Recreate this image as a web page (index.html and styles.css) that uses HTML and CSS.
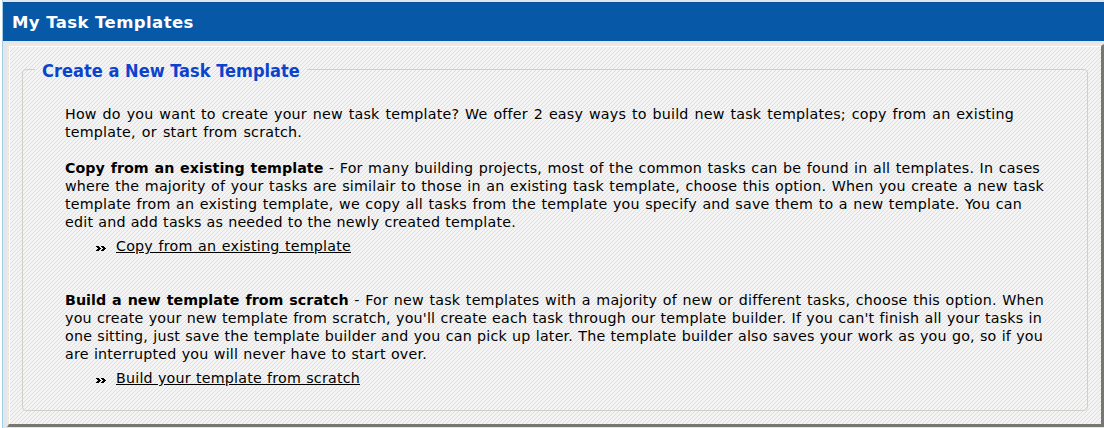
FILE: index.html
```html
<!DOCTYPE html>
<html lang="en">
<head>
<meta charset="utf-8">
<title>My Task Templates</title>
<link rel="stylesheet" href="styles.css">
</head>
<body>
<div class="window">
  <h1 class="title">My Task Templates</h1>
  <main class="panel">
    <fieldset class="group">
      <legend class="legend"><span class="caption">Create a New Task Template</span></legend>
      <p class="text">
        <span class="line w949">How do you want to create your new task template? We offer 2 easy ways to build new task templates; copy from an existing</span>
        <span class="line w237">template, or start from scratch.</span>
      </p>
      <p class="text">
        <span class="line w975"><b>Copy from an existing template</b> - For many building projects, most of the common tasks can be found in all templates. In cases</span>
        <span class="line w979">where the majority of your tasks are similair to those in an existing task template, choose this option. When you create a new task</span>
        <span class="line w957">template from an existing template, we copy all tasks from the template you specify and save them to a new template. You can</span>
        <span class="line w451">edit and add tasks as needed to the newly created template.</span>
      </p>
      <div class="action">
        <svg class="arrows" width="10" height="5" viewBox="0 0 10 5" shape-rendering="crispEdges"><path d="M0 0h3v1h1v1h1v1h-1v1h-1v1h-3v-1h1v-1h1v-1h-1v-1h-1zM5 0h3v1h1v1h1v1h-1v1h-1v1h-3v-1h1v-1h1v-1h-1v-1h-1z"/></svg>
        <a class="link w235">Copy from an existing template</a>
      </div>
      <p class="text second">
        <span class="line w979"><b>Build a new template from scratch</b> - For new task templates with a majority of new or different tasks, choose this option. When</span>
        <span class="line w977">you create your new template from scratch, you'll create each task through our template builder. If you can't finish all your tasks in</span>
        <span class="line w978">one sitting, just save the template builder and you can pick up later. The template builder also saves your work as you go, so if you</span>
        <span class="line w362">are interrupted you will never have to start over.</span>
      </p>
      <div class="action">
        <svg class="arrows" width="10" height="5" viewBox="0 0 10 5" shape-rendering="crispEdges"><path d="M0 0h3v1h1v1h1v1h-1v1h-1v1h-3v-1h1v-1h1v-1h-1v-1h-1zM5 0h3v1h1v1h1v1h-1v1h-1v1h-3v-1h1v-1h1v-1h-1v-1h-1z"/></svg>
        <a class="link w244">Build your template from scratch</a>
      </div>
    </fieldset>
  </main>
</div>
</body>
</html>
```
FILE: styles.css
```css
* { box-sizing: border-box; }
body { margin: 0; background: #fff; overflow: hidden; font-family: Verdana, "DejaVu Sans", sans-serif; color: #000; }
.window { height: 428px; margin-left: 2px; padding-top: 2px; border-left: 1px solid #a5cfe0; background: #e0e7ed; }
.title { margin: 0; height: 39px; padding-left: 9px; background: #0858a8; border-top: 1px solid #0a4f98; color: #fff; font-size: 16.5px; line-height: 40px; font-weight: bold; letter-spacing: 0.42px; }
.panel { margin: 3px 0 0 4px; height: 383px; padding: 13px 13px 0 13px; border: 2px solid #f1e7df; border-right: 3px solid #77776f; border-bottom: 3px solid #77776f;
  background: repeating-linear-gradient(135deg, #f4f4f4 0 1.6px, #dedede 1.6px 2.8284px); box-shadow: inset 1px 1px #fff; }
.group { margin: 0; padding: 0 0 0 42px; border: 1px solid #d0d0c8; border-radius: 4px; height: 352px; min-width: 0; }
.legend { margin-left: -30px; padding: 0 7px; height: 20px; line-height: 24px; font-family: Tahoma, "DejaVu Sans Condensed", "DejaVu Sans", sans-serif; font-size: 18px; font-weight: bold; color: #0b43cc; letter-spacing: 0.04px; }
.text { margin: 0 0 18px; font-size: 14.25px; line-height: 18px; letter-spacing: 0.21px; }
.legend + .text { margin-top: 26px; }
.text b { letter-spacing: 0.05px; }
.line { display: block; white-space: nowrap; text-align: justify; text-align-last: justify; }
.action { display: flex; align-items: center; height: 18px; margin: -12px 0 0 31px; font-size: 14.25px; letter-spacing: 0.21px; }
.arrows { margin: 5px 10px 0 0; }
.link { text-decoration: underline; white-space: nowrap; text-align-last: justify; }
.second { margin-top: 36px; }
.w949 { width: 949px; }
.w237 { width: 237px; }
.w975 { width: 975px; }
.w979 { width: 979px; }
.w957 { width: 957px; }
.w451 { width: 451px; }
.w235 { width: 235px; }
.w977 { width: 977px; }
.w978 { width: 978px; }
.w362 { width: 362px; }
.w244 { width: 244px; }
```
